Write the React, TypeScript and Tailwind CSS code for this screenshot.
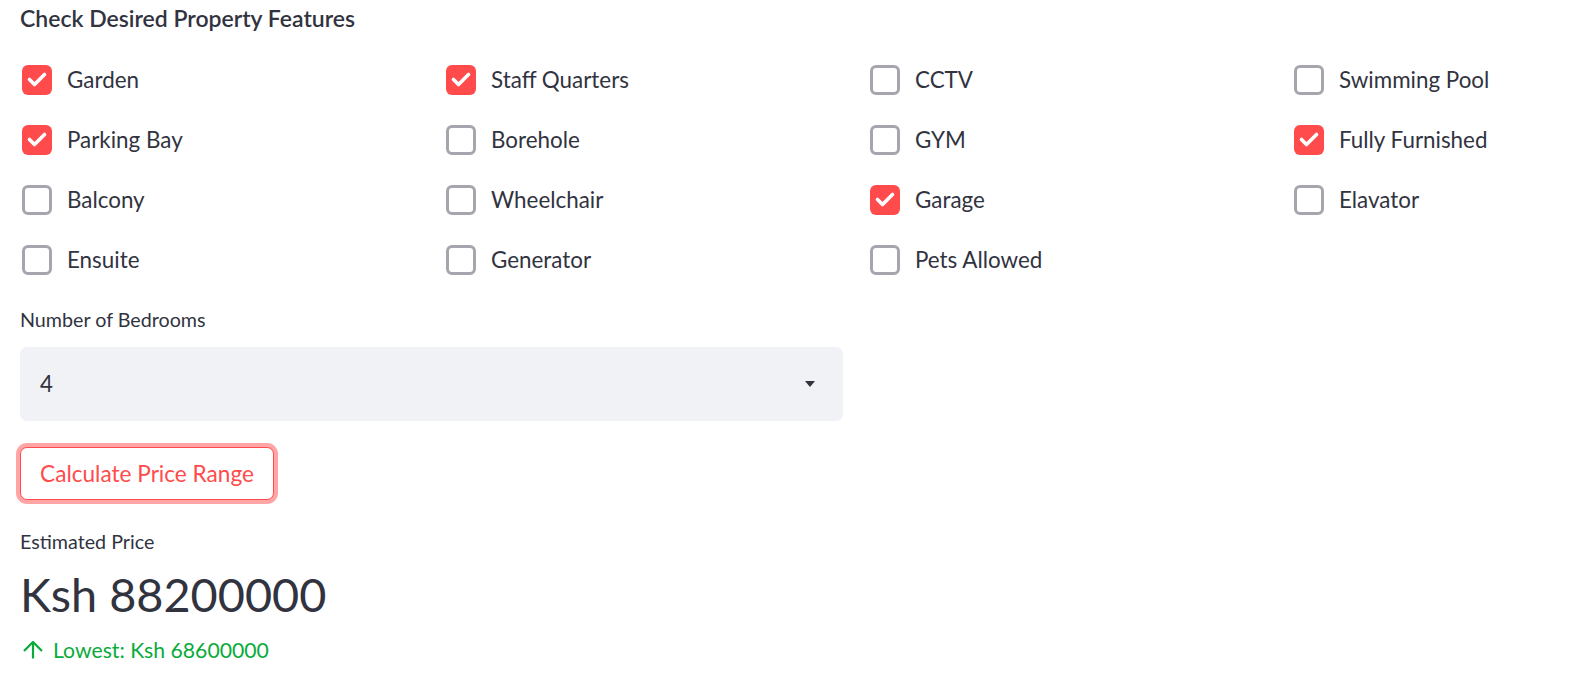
import React from "react";

const items: [string, boolean][] = [
  ["Garden", true],
  ["Staff Quarters", true],
  ["CCTV", false],
  ["Swimming Pool", false],
  ["Parking Bay", true],
  ["Borehole", false],
  ["GYM", false],
  ["Fully Furnished", true],
  ["Balcony", false],
  ["Wheelchair", false],
  ["Garage", true],
  ["Elavator", false],
  ["Ensuite", false],
  ["Generator", false],
  ["Pets Allowed", false],
];

function Box({ checked }: { checked: boolean }) {
  if (checked) {
    return (
      <div className="ml-[2px] flex h-[30px] w-[30px] shrink-0 items-center justify-center rounded-[6px] bg-[#ff4b4b]">
        <svg width="30" height="30" viewBox="0 0 30 30">
          <path d="M7.5 14.5 L12.5 19.5 L22.5 9.5" fill="none" stroke="#ffffff" strokeWidth="3.6" strokeLinecap="round" strokeLinejoin="round" />
        </svg>
      </div>
    );
  }
  return <div className="ml-[2px] h-[30px] w-[30px] shrink-0 rounded-[6px] border-[3px] border-[#a5a6ad] bg-white" />;
}

export default function App() {
  return (
    <div className="h-[678px] w-full overflow-hidden bg-white text-[#31333f]" style={{ fontFamily: "Lato, 'Noto Sans', sans-serif" }}>
      <div className="pl-[20px] pt-[3px]">
        <div className="h-[30px] text-[23px] font-semibold leading-[30px]">Check Desired Property Features</div>
        <div className="mt-[17px] grid w-[1696px] grid-cols-[400px_400px_400px_400px] gap-x-[24px]">
          {items.map(([label, checked]) => (
            <div key={label} className="flex h-[60px] items-center">
              <Box checked={checked} />
              <span className="ml-[15px] text-[22.4px] leading-[30px]">{label}</span>
            </div>
          ))}
        </div>
        <div className="mt-[16px] h-[28px] text-[19.7px] leading-[28px]">Number of Bedrooms</div>
        <div className="mt-[13px] flex h-[74px] w-[823px] items-center justify-between rounded-[7px] bg-[#f0f2f6] pl-[20px] pr-[28px]">
          <span className="text-[22.3px] leading-[30px]">4</span>
          <svg width="10" height="6" viewBox="0 0 10 6">
            <path d="M0 0 H10 L5 6 Z" fill="#31333f" />
          </svg>
        </div>
        <div className="mt-[26px]">
          <button className="flex h-[53px] w-[254px] items-center justify-center rounded-[7px] border-[1.5px] border-[#ff4b4b] bg-white text-[22.6px] text-[#ff4b4b] shadow-[0_0_0_4px_rgba(255,75,75,0.5)]">
            Calculate Price Range
          </button>
        </div>
        <div className="mt-[28px] h-[28px] text-[19.7px] leading-[28px]">Estimated Price</div>
        <div className="mt-[10px] h-[56px] text-[46.8px] leading-[56px]">Ksh 88200000</div>
        <div className="mt-[14px] flex h-[28px] items-center text-[21.2px] leading-[28px] text-[#09ab3b]">
          <svg width="22" height="18" viewBox="0 0 22 18" className="ml-[2px]">
            <path d="M11 17.5 V1.5 M2 10 L11 1 L20 10" fill="none" stroke="#09ab3b" strokeWidth="2.2" />
          </svg>
          <span className="ml-[9px]">Lowest: Ksh 68600000</span>
        </div>
      </div>
    </div>
  );
}
